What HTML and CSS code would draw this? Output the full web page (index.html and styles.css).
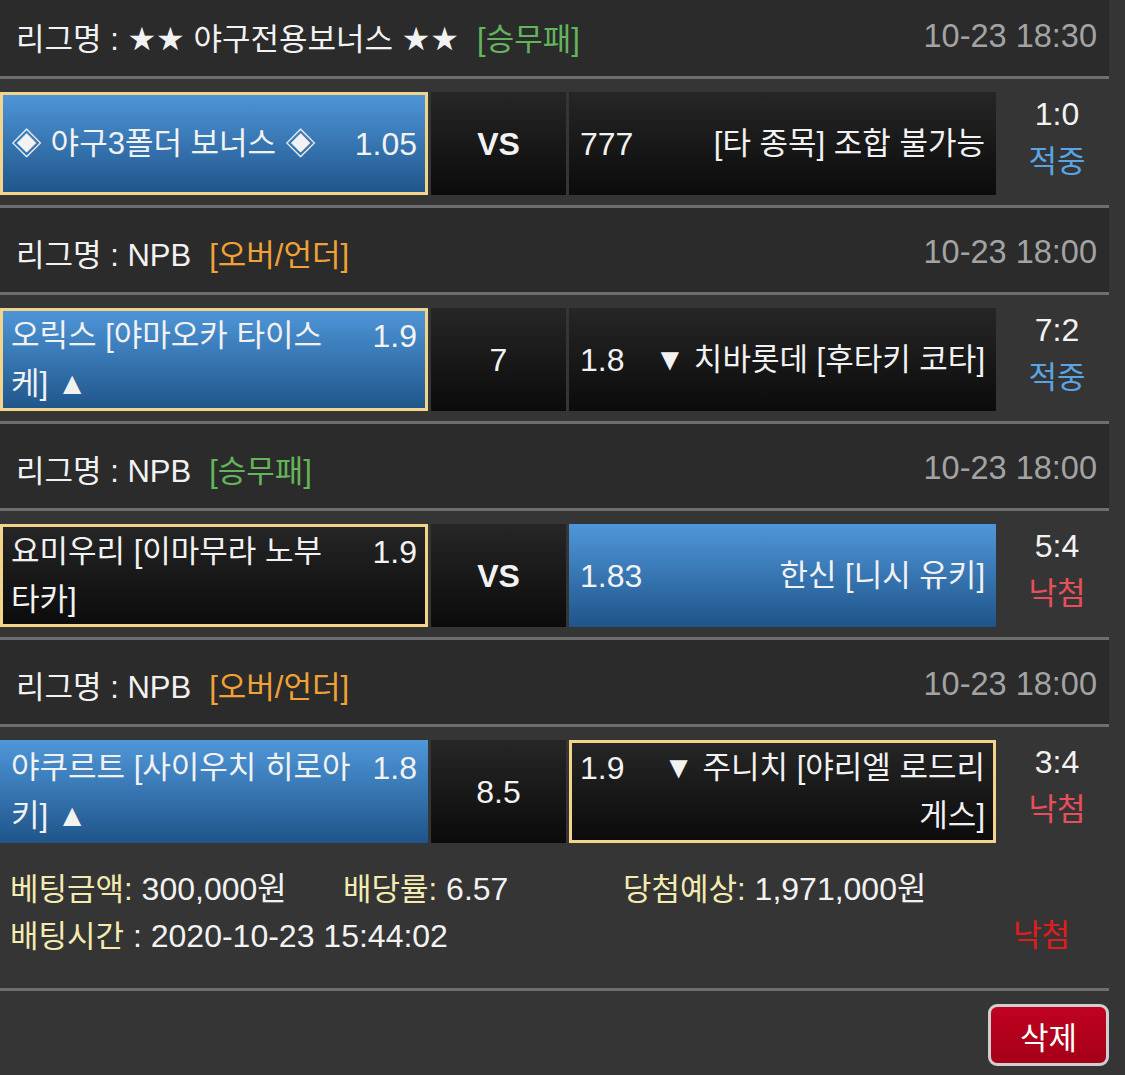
FILE: index.html
```html
<!DOCTYPE html>
<html lang="ko">
<head>
<meta charset="utf-8">
<title>배팅내역</title>
<link rel="stylesheet" href="styles.css">
</head>
<body>
<div class="board">
  <div class="league first">
    <div class="league-name">리그명 : <span class="star">★★</span> 야구전용보너스 <span class="star">★★</span><span class="tag tag-green">[승무패]</span></div>
    <div class="league-time">10-23 18:30</div>
  </div>
  <div class="sep"></div>
  <div class="match">
    <div class="cell blue picked"><div class="inner"><span class="name">◈ 야구3폴더 보너스 ◈</span><span class="odds">1.05</span></div></div>
    <div class="cell dark mid"><span class="vs">VS</span></div>
    <div class="cell dark"><div class="inner"><span class="odds">777</span><span class="name right">[타 종목] 조합 불가능</span></div></div>
    <div class="score"><div>1:0</div><div class="hit">적중</div></div>
  </div>
  <div class="sep"></div>

  <div class="league">
    <div class="league-name">리그명 : NPB<span class="tag tag-orange">[오버/언더]</span></div>
    <div class="league-time">10-23 18:00</div>
  </div>
  <div class="sep"></div>
  <div class="match">
    <div class="cell blue picked"><div class="inner"><span class="name">오릭스 [야마오카 타이스<br>케] ▲</span><span class="odds">1.9</span></div></div>
    <div class="cell dark mid"><span class="line">7</span></div>
    <div class="cell dark"><div class="inner"><span class="odds">1.8</span><span class="name right">▼ 치바롯데 [후타키 코타]</span></div></div>
    <div class="score"><div>7:2</div><div class="hit">적중</div></div>
  </div>
  <div class="sep"></div>

  <div class="league">
    <div class="league-name">리그명 : NPB<span class="tag tag-green">[승무패]</span></div>
    <div class="league-time">10-23 18:00</div>
  </div>
  <div class="sep"></div>
  <div class="match">
    <div class="cell dark picked"><div class="inner"><span class="name">요미우리 [이마무라 노부<br>타카]</span><span class="odds">1.9</span></div></div>
    <div class="cell dark mid"><span class="vs">VS</span></div>
    <div class="cell blue"><div class="inner"><span class="odds">1.83</span><span class="name right">한신 [니시 유키]</span></div></div>
    <div class="score"><div>5:4</div><div class="miss">낙첨</div></div>
  </div>
  <div class="sep"></div>

  <div class="league">
    <div class="league-name">리그명 : NPB<span class="tag tag-orange">[오버/언더]</span></div>
    <div class="league-time">10-23 18:00</div>
  </div>
  <div class="sep"></div>
  <div class="match">
    <div class="cell blue"><div class="inner"><span class="name">야쿠르트 [사이우치 히로아<br>키] ▲</span><span class="odds">1.8</span></div></div>
    <div class="cell dark mid"><span class="line">8.5</span></div>
    <div class="cell dark picked"><div class="inner"><span class="odds">1.9</span><span class="name right">▼ 주니치 [야리엘 로드리<br>게스]</span></div></div>
    <div class="score"><div>3:4</div><div class="miss">낙첨</div></div>
  </div>

  <div class="summary">
    <div class="sum-row">
      <div class="sum-item w1"><span class="label">베팅금액:</span> 300,000원</div>
      <div class="sum-item w2"><span class="label">배당률:</span> 6.57</div>
      <div class="sum-item"><span class="label">당첨예상:</span> 1,971,000원</div>
    </div>
    <div class="sum-row between">
      <div class="sum-item"><span class="label">배팅시간</span> : 2020-10-23 15:44:02</div>
      <div class="result">낙첨</div>
    </div>
  </div>
  <div class="sep"></div>
  <div class="actions">
    <button class="btn-delete" type="button">삭제</button>
  </div>
</div>
</body>
</html>
```

FILE: styles.css
```css
* {
  box-sizing: border-box;
}

html,
body {
  margin: 0;
  padding: 0;
  background: #353535;
}

body {
  font-family: "Liberation Sans", "Noto Sans CJK KR", sans-serif;
  font-size: 32px;
  color: #f2f2f2;
  overflow: hidden;
}

.board {
  width: 1109px;
  margin-top: -8px;
}

.league {
  height: 84px;
  background: #2b2b2b;
  display: flex;
  align-items: center;
  justify-content: space-between;
  padding: 5px 12px 0 16px;
  white-space: nowrap;
}

.league-name {
  font-size: 31px;
}

.star {
  font-family: "DejaVu Sans", sans-serif;
  font-size: 32px;
}

.tag {
  margin-left: 18px;
}

.tag-green {
  color: #62b55a;
}

.tag-orange {
  color: #f0a235;
}

.league-time {
  color: #a3a3a3;
  font-size: 32.5px;
}

.sep {
  height: 3px;
  background: #6e6e6e;
}

.match {
  display: grid;
  grid-template-columns: 428px 135px 427px 1fr;
  column-gap: 3px;
  padding: 13px 0 10px;
}

.cell {
  height: 103px;
  border: 3px solid transparent;
  padding: 0 8px;
  display: flex;
  align-items: center;
  line-height: 48px;
  background-origin: border-box;
}

.blue {
  background-image: linear-gradient(to bottom, #4f97da, #1f5489);
}

.dark {
  background-image: linear-gradient(to bottom, #262626, #0b0b0b);
}

.picked {
  border-color: #f2d48a;
}

.mid {
  justify-content: center;
}

.vs {
  font-weight: bold;
}

.inner {
  width: 100%;
  display: flex;
  justify-content: space-between;
  align-items: flex-start;
  gap: 10px;
}

.name {
  font-size: 31px;
  white-space: nowrap;
}

.name.right {
  text-align: right;
}

.odds {
  flex: none;
}

.score {
  height: 103px;
  display: flex;
  flex-direction: column;
  align-items: center;
  justify-content: center;
  padding: 0 0 12px 6px;
  line-height: 47px;
}

.hit {
  color: #5ba4e4;
  font-size: 31px;
}

.miss {
  color: #e5505a;
  font-size: 31px;
}

.summary {
  padding: 13px 39px 28px 10px;
  line-height: 46px;
}

.sum-row {
  display: flex;
}

.sum-row.between {
  justify-content: space-between;
}

.w1 {
  width: 333px;
}

.w2 {
  width: 280px;
}

.label {
  color: #f3ebb0;
  font-size: 31px;
}

.result {
  color: #e01c1c;
  font-size: 31px;
}

.actions {
  display: flex;
  justify-content: flex-end;
  padding-top: 13px;
}

.btn-delete {
  width: 121px;
  height: 62px;
  border: 3px solid #cfcfcf;
  border-radius: 9px;
  background: linear-gradient(to bottom, #c0021f, #a50019);
  color: #ffffff;
  font-family: "Liberation Sans", "Noto Sans CJK KR", sans-serif;
  font-size: 31px;
  padding: 0;
}
```
